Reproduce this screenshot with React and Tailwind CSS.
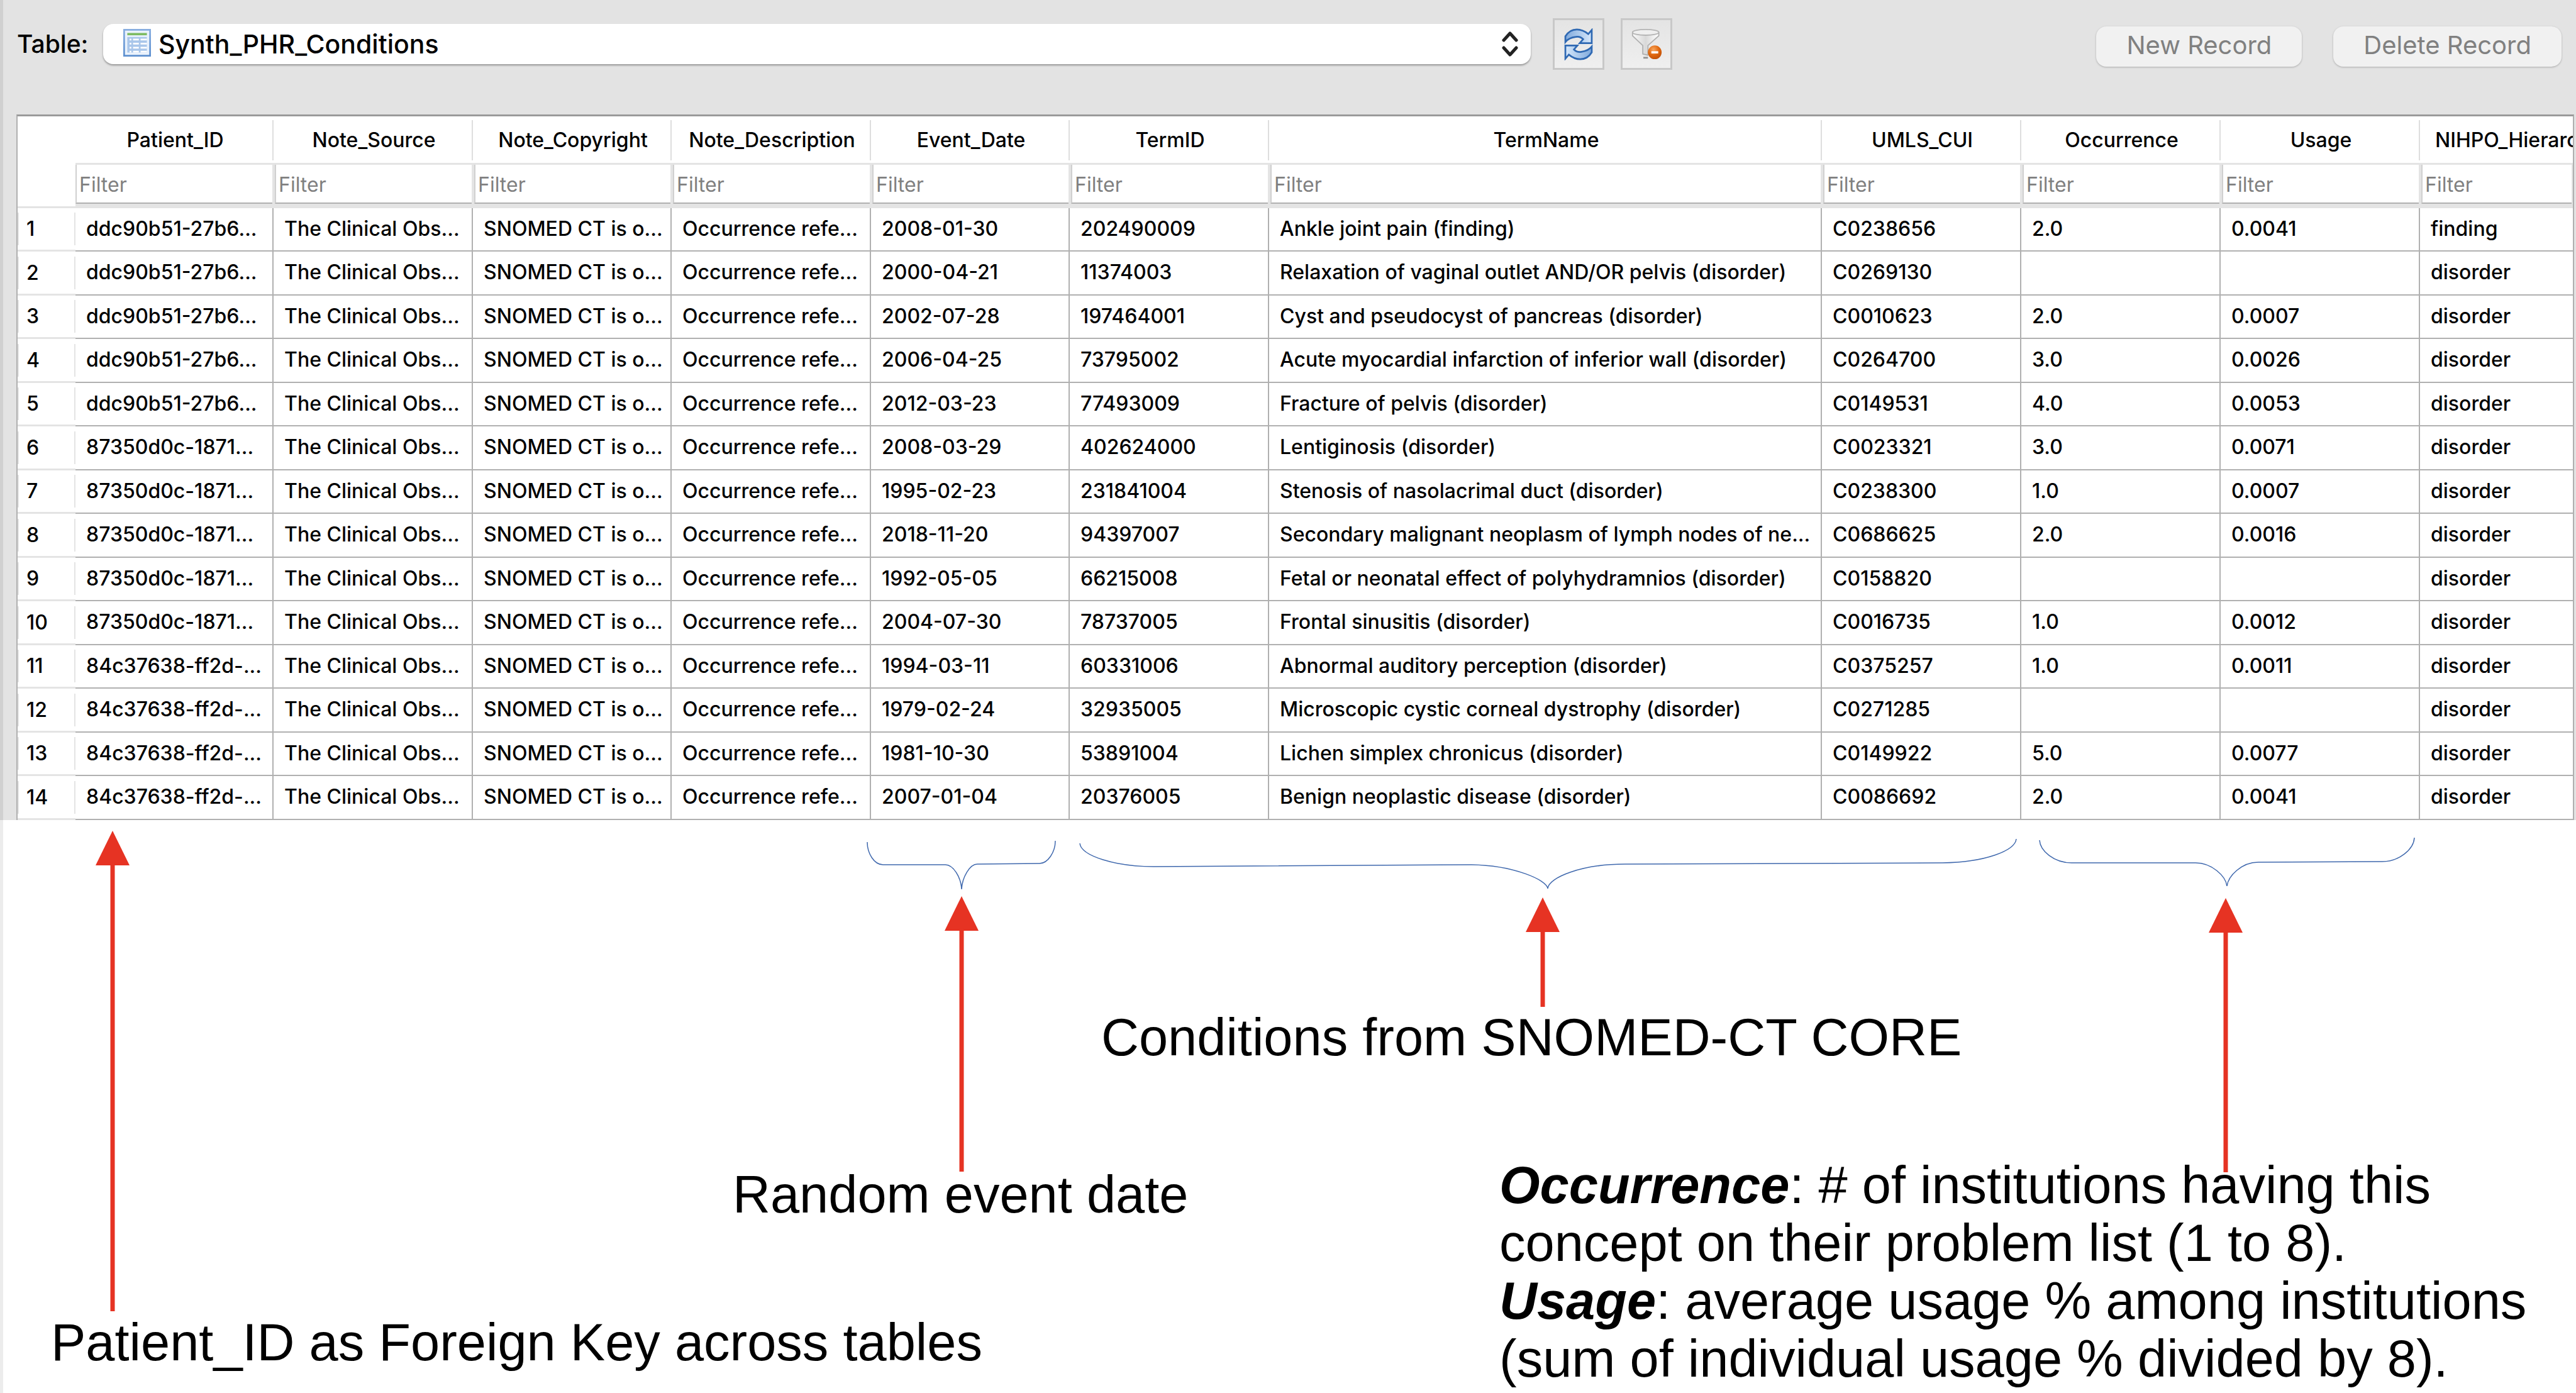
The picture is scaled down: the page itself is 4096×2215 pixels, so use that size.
import React from "react";

const RED = "#e63323";

const columns = [
  { name: "Patient_ID", width: "w-[315px]" },
  { name: "Note_Source", width: "w-[317px]" },
  { name: "Note_Copyright", width: "w-[316px]" },
  { name: "Note_Description", width: "w-[317px]" },
  { name: "Event_Date", width: "w-[316px]" },
  { name: "TermID", width: "w-[317px]" },
  { name: "TermName", width: "w-[879px]" },
  { name: "UMLS_CUI", width: "w-[317px]" },
  { name: "Occurrence", width: "w-[317px]" },
  { name: "Usage", width: "w-[317px]" },
  { name: "NIHPO_Hierarchy", width: "" },
];

const A = "ddc90b51-27b6...";
const B = "87350d0c-1871...";
const C = "84c37638-ff2d-...";

const records = [
  [A, "2008-01-30", "202490009", "Ankle joint pain (finding)", "C0238656", "2.0", "0.0041", "finding"],
  [A, "2000-04-21", "11374003", "Relaxation of vaginal outlet AND/OR pelvis (disorder)", "C0269130", "", "", "disorder"],
  [A, "2002-07-28", "197464001", "Cyst and pseudocyst of pancreas (disorder)", "C0010623", "2.0", "0.0007", "disorder"],
  [A, "2006-04-25", "73795002", "Acute myocardial infarction of inferior wall (disorder)", "C0264700", "3.0", "0.0026", "disorder"],
  [A, "2012-03-23", "77493009", "Fracture of pelvis (disorder)", "C0149531", "4.0", "0.0053", "disorder"],
  [B, "2008-03-29", "402624000", "Lentiginosis (disorder)", "C0023321", "3.0", "0.0071", "disorder"],
  [B, "1995-02-23", "231841004", "Stenosis of nasolacrimal duct (disorder)", "C0238300", "1.0", "0.0007", "disorder"],
  [B, "2018-11-20", "94397007", "Secondary malignant neoplasm of lymph nodes of ne...", "C0686625", "2.0", "0.0016", "disorder"],
  [B, "1992-05-05", "66215008", "Fetal or neonatal effect of polyhydramnios (disorder)", "C0158820", "", "", "disorder"],
  [B, "2004-07-30", "78737005", "Frontal sinusitis (disorder)", "C0016735", "1.0", "0.0012", "disorder"],
  [C, "1994-03-11", "60331006", "Abnormal auditory perception (disorder)", "C0375257", "1.0", "0.0011", "disorder"],
  [C, "1979-02-24", "32935005", "Microscopic cystic corneal dystrophy (disorder)", "C0271285", "", "", "disorder"],
  [C, "1981-10-30", "53891004", "Lichen simplex chronicus (disorder)", "C0149922", "5.0", "0.0077", "disorder"],
  [C, "2007-01-04", "20376005", "Benign neoplastic disease (disorder)", "C0086692", "2.0", "0.0041", "disorder"],
].map(([id, ...rest]) => [id, "The Clinical Obs...", "SNOMED CT is o...", "Occurrence refe...", ...rest]);

function TableIcon() {
  return (
    <svg viewBox="0 0 48 48" className="size-11" aria-hidden="true">
      <defs>
        <linearGradient id="tableFrame" x1="0" y1="0" x2="0" y2="1">
          <stop offset="0" stopColor="#88aee0" />
          <stop offset="1" stopColor="#5c8fcf" />
        </linearGradient>
      </defs>
      <rect width="48" height="48" fill="url(#tableFrame)" />
      <rect x="3" y="3" width="42" height="42" fill="#eaf2fc" />
      <rect x="7" y="7" width="34" height="4" fill="#7dbb62" />
      <rect x="7" y="14" width="34" height="27" fill="#a9c6ea" />
      <path
        fill="#fff"
        d="M11 17h3v3h-3zM17 17h10v3H17zM30 17h11v3H30zM11 24h3v3h-3zM17 24h10v3H17zM30 24h11v3H30zM11 31h3v3h-3zM17 31h10v3H17zM30 31h11v3H30zM11 38h3v3h-3zM17 38h10v3H17zM30 38h11v3H30z"
      />
    </svg>
  );
}

function RefreshIcon() {
  return (
    <svg viewBox="0 0 50 56" className="h-[51px] w-[46px]" aria-hidden="true">
      <defs>
        <linearGradient id="arrowFill" x1="0" y1="0" x2="1" y2="0">
          <stop offset="0" stopColor="#7fa9dc" />
          <stop offset="1" stopColor="#d6e8fb" />
        </linearGradient>
        <linearGradient id="arrowFillBack" x1="0" y1="0" x2="1" y2="0">
          <stop offset="0" stopColor="#d6e8fb" />
          <stop offset="1" stopColor="#7fa9dc" />
        </linearGradient>
      </defs>
      <path d="M2 24V14C8 4 16 2 22 2c9 0 14 3 20 8l6-7V26H27l6-7c-4-4-8-5-13-4C12 16 6 19 2 24Z" fill="url(#arrowFill)" stroke="#2f69b3" strokeWidth="3" />
      <path d="M48 32v10c-6 10-14 12-20 12-9 0-14-3-20-8l-6 7V30h21l-6 7c4 4 8 5 13 4 8-1 14-4 18-9Z" fill="url(#arrowFillBack)" stroke="#2f69b3" strokeWidth="3" />
    </svg>
  );
}

function ClearFilterIcon() {
  return (
    <svg viewBox="0 0 54 54" className="size-[49px]" aria-hidden="true">
      <defs>
        <linearGradient id="funnel" x1="0" y1="0" x2="1" y2="0">
          <stop offset="0" stopColor="#fafafa" />
          <stop offset="0.5" stopColor="#d9d9d9" />
          <stop offset="1" stopColor="#fff" />
        </linearGradient>
        <radialGradient id="badge" cx="0.4" cy="0.3" r="0.8">
          <stop offset="0" stopColor="#f9a55c" />
          <stop offset="0.5" stopColor="#e0680f" />
          <stop offset="1" stopColor="#b94a05" />
        </radialGradient>
      </defs>
      <path d="M2 6V12L20 29V44l9 2V29L48 12V6Z" fill="url(#funnel)" stroke="#b0b0b0" strokeWidth="2" strokeLinejoin="round" />
      <ellipse cx="25" cy="6" rx="23" ry="5" fill="#efefef" stroke="#b4b4b4" strokeWidth="2" />
      <path d="M21 49h8v3h-8z" fill="#8f8f8f" />
      <circle cx="41" cy="41" r="12" fill="url(#badge)" />
      <rect x="35" y="39" width="12" height="4" fill="#fff" />
    </svg>
  );
}

function Toolbar() {
  const iconButton =
    "flex size-[82px] items-center justify-center border-[3px] border-[#c8c8c8] bg-gradient-to-b from-[#e4e4e4] to-[#efefef]";
  const pushButton =
    "h-16 rounded-[16px] bg-[#f1f1f1] px-12 pb-1 text-[40px] leading-[60px] text-[#808080] shadow-[0_1px_3px_rgba(0,0,0,0.25)]";
  return (
    <div className="flex h-[182px] items-start pr-[23px] pl-[22px] pt-[29px]">
      <div className="flex h-[82px] items-center">
        <label htmlFor="table-select" className="w-[137px] text-[39px] font-medium">Table:</label>
        <div className="relative w-[2270px]">
          <select
            id="table-select"
            className="block h-16 w-full appearance-none rounded-[16px] bg-white pt-0.5 pl-[88px] text-[41px] font-medium shadow-[0_2px_3px_rgba(0,0,0,0.35)]"
          >
            <option>Synth_PHR_Conditions</option>
          </select>
          <span className="pointer-events-none absolute inset-y-0 left-8 flex items-center pb-1">
            <TableIcon />
          </span>
          <span className="pointer-events-none absolute inset-y-0 right-5 flex items-center">
            <svg viewBox="0 0 26 40" className="h-10 w-[26px]" fill="none" stroke="#222" strokeWidth="5" strokeLinecap="round" strokeLinejoin="round" aria-hidden="true">
              <path d="m3 14 10-11 10 11M3 26l10 11 10-11" />
            </svg>
          </span>
        </div>
        <button type="button" aria-label="Refresh" className={"ml-[35px] " + iconButton}>
          <RefreshIcon />
        </button>
        <button type="button" aria-label="Clear filters" className={"ml-[26px] " + iconButton}>
          <ClearFilterIcon />
        </button>
      </div>
      <div className="ml-auto flex gap-[50px] pt-[13px]">
        <button type="button" disabled className={pushButton}>New Record</button>
        <button type="button" disabled className={pushButton}>Delete Record</button>
      </div>
    </div>
  );
}

function RecordTable() {
  return (
    <table className="w-full table-fixed border-separate border-spacing-0 border-t-[3px] border-r-2 border-l-2 border-t-[#9a9a9a] border-r-[#b0b0b0] border-l-[#b0b0b0] bg-white text-[32px] leading-[40px] font-medium">
      <colgroup>
        <col className="w-[92px]" />
        {columns.map((c) => (
          <col key={c.name} className={c.width} />
        ))}
      </colgroup>
      <thead>
        <tr className="h-[74px]">
          <td />
          {columns.map((c, i) => (
            <th key={c.name} scope="col" className="overflow-hidden p-0 pt-0.5 font-medium whitespace-nowrap">
              <div
                className={
                  i === columns.length - 1
                    ? "py-3 pl-6 text-left"
                    : "border-r-2 border-[#dedede] py-3 pl-1 text-center"
                }
              >
                {c.name}
              </div>
            </th>
          ))}
        </tr>
        <tr className="h-[72px]">
          <td className="border-b-[3px] border-[#e4e4e4] p-0" />
          {columns.map((c, i) => (
            <td
              key={c.name}
              className={
                "border-t-[3px] border-r-2 border-b-[7px] border-[#e4e4e4] p-0 " + (i > 0 ? "border-l-2" : "")
              }
            >
              <input
                aria-label={"Filter " + c.name}
                placeholder="Filter"
                className="block h-[62px] w-full border-b-2 border-l-2 border-b-[#b0b0b0] border-l-[#d0d0d0] pt-0.5 pl-1 font-normal placeholder:text-[#808080]"
              />
            </td>
          ))}
        </tr>
      </thead>
      <tbody>
        {records.map((row, r) => (
          <tr key={r} className="odd:h-[69px] even:h-[70px]">
            <th scope="row" className="border-b-[3px] border-[#e4e4e4] p-0 text-left font-medium">
              <div className="border-x-2 border-[#e4e4e4] py-1.5 pl-3">{r + 1}</div>
            </th>
            {row.map((cell, i) => (
              <td
                key={i}
                className={
                  "overflow-hidden border-b-2 border-[#b0b0b0] p-0 pb-0.5 pl-[17px] whitespace-nowrap " +
                  (i < row.length - 1 ? "border-r-2" : "")
                }
              >
                {cell}
              </td>
            ))}
          </tr>
        ))}
      </tbody>
    </table>
  );
}

function Arrow({ length, className }) {
  return (
    <svg width="56" height={length} viewBox={"0 0 56 " + length} className={"absolute " + className} aria-hidden="true">
      <path d="M28 0 55 55H1Z" fill={RED} />
      <path d={"M28 50V" + length} stroke={RED} strokeWidth="7" />
    </svg>
  );
}

function Brace({ width, height, d, className }) {
  return (
    <svg width={width} height={height} viewBox={"0 0 " + width + " " + height} className={"absolute " + className} fill="none" stroke="#3f68ad" strokeWidth="1.5" aria-hidden="true">
      <path d={d} />
    </svg>
  );
}

function Annotations() {
  return (
    <section className="relative min-h-[910px] flex-1 border-l-[5px] border-[#ececec] bg-white font-['Liberation_Sans',Arial,sans-serif] text-[83px] leading-[92px]">
      <Brace width={302} height={78} className="top-[33px] left-[1373px]" d="M1 2C1 20 12 38 26 38L125 38C138 38 150 58 151 77C152 58 164 37 176 37L275 36C288 36 300 18 300 0" />
      <Brace width={1494} height={82} className="top-[29px] left-[1711px]" d="M1 8C3 28 58 45 118 45L624 42C690 43 744 66 745 80C746 62 800 41 868 41L1373 39C1440 38 1488 20 1490 1" />
      <Brace width={602} height={80} className="top-[27px] left-[3237px]" d="M1 5C2 22 24 41 52 41L249 41C275 41 297 62 299 78C301 62 322 40 349 40L546 39C572 39 596 20 597 1" />
      <Arrow length={764} className="top-[17px] left-[146px]" />
      <Arrow length={438} className="top-[121px] left-[1496px]" />
      <Arrow length={174} className="top-[123px] left-[2420px]" />
      <Arrow length={436} className="top-[124px] left-[3506px]" />
      <p className="absolute top-[300px] left-[1746px] whitespace-nowrap">Conditions from SNOMED-CT CORE</p>
      <p className="absolute top-[550px] left-[1160px] whitespace-nowrap">Random event date</p>
      <p className="absolute top-[785px] left-[76px] whitespace-nowrap">Patient_ID as Foreign Key across tables</p>
      <p className="absolute top-[535px] left-[2379px] whitespace-nowrap">
        <strong className="italic">Occurrence</strong>: # of institutions having this
        <br />
        concept on their problem list (1 to 8).
        <br />
        <strong className="italic">Usage</strong>: average usage % among institutions
        <br />
        (sum of individual usage % divided by 8).
      </p>
    </section>
  );
}

export default function App() {
  return (
    <main className="flex min-h-screen flex-col overflow-hidden bg-white font-[Inter,sans-serif] text-black">
      <div className="border-l-[5px] border-[#d0d0d0] bg-[#e3e3e3]">
        <Toolbar />
        <div className="pr-[3px] pl-[21px]">
          <RecordTable />
        </div>
      </div>
      <Annotations />
    </main>
  );
}
